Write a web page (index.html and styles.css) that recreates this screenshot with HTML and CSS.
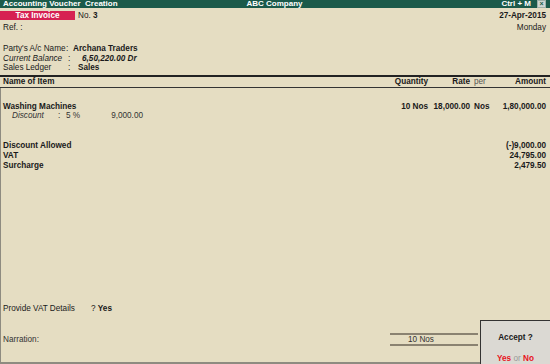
FILE: index.html
```html
<!DOCTYPE html>
<html lang="en">
<head>
    <meta charset="UTF-8">
    <title>Accounting Voucher Creation</title>
    <link rel="stylesheet" href="styles.css">
</head>
<body>

    <div class="titlebar">
        <span class="title-left">Accounting Voucher &nbsp;Creation</span>
        <span class="title-mid">ABC Company</span>
        <span class="title-right">Ctrl + M <span class="close-box">&times;</span></span>
    </div>

    <div class="voucher-head">
        <div class="head-row">
            <div class="head-left">
                <span class="vtype">Tax Invoice</span>
                <span class="vno">No. <strong>3</strong></span>
            </div>
            <strong>27-Apr-2015</strong>
        </div>
        <div class="head-row">
            <span>Ref. :</span>
            <span>Monday</span>
        </div>
    </div>

    <div class="party">
        <div class="party-row">
            <span class="label">Party's A/c Name</span>
            <span class="colon">:</span>
            <strong>Archana Traders</strong>
        </div>
        <div class="party-row">
            <span class="label"><em>Current Balance</em></span>
            <span class="colon wide">:</span>
            <strong class="balance"><em>6,50,220.00 Dr</em></strong>
        </div>
        <div class="party-row">
            <span class="label">Sales Ledger</span>
            <span class="colon wide">:</span>
            <strong>Sales</strong>
        </div>
    </div>

    <div class="item-head">
        <span class="col-name">Name of Item</span>
        <span class="col-qty">Quantity</span>
        <span class="col-rate">Rate</span>
        <span class="col-per">per</span>
        <span class="col-amt">Amount</span>
    </div>

    <div class="main">
        <div class="items">
            <div class="item-row bold">
                <span class="col-name">Washing Machines</span>
                <span class="col-qty">10 Nos</span>
                <span class="col-rate">18,000.00</span>
                <span class="col-per">Nos</span>
                <span class="col-amt">1,80,000.00</span>
            </div>
            <div class="disc-row">
                <em class="disc-label">Discount</em>
                <span class="disc-colon">:</span>
                <span class="disc-pct">5 %</span>
                <span class="disc-val">9,000.00</span>
            </div>
        </div>

        <div class="ledgers">
            <div class="item-row bold">
                <span class="col-name">Discount Allowed</span>
                <span class="col-amt">(-)9,000.00</span>
            </div>
            <div class="item-row bold">
                <span class="col-name">VAT</span>
                <span class="col-amt">24,795.00</span>
            </div>
            <div class="item-row bold">
                <span class="col-name">Surcharge</span>
                <span class="col-amt">2,479.50</span>
            </div>
        </div>

        <div class="vat-row">
            <span class="vat-label">Provide VAT Details</span>
            <span>? <strong>Yes</strong></span>
        </div>

        <div class="narration-row">
            <span class="narr-label">Narration:</span>
            <div class="total-qty">10 Nos</div>
        </div>

        <div class="accept">
            <strong>Accept ?</strong>
            <div class="accept-opts"><b>Yes</b> or <b>No</b></div>
        </div>
    </div>

</body>
</html>
```

FILE: styles.css
```css
body {
    font-family: 'Liberation Sans', Arial, sans-serif;
    font-size: 8.2px;
    color: #1a1a1a;
    background-color: #e5ddc2;
    margin: 0;
    width: 550px;
    height: 364px;
    display: flex;
    flex-direction: column;
    overflow: hidden;
    white-space: nowrap;
}

strong, b {
    font-weight: bold;
}

.titlebar {
    height: 8px;
    line-height: 8px;
    background-color: #1b5a4a;
    color: white;
    font-weight: bold;
    font-size: 8px;
    padding: 0 4px 0 3px;
    display: flex;
    justify-content: space-between;
    align-items: center;
}

.title-left,
.title-right {
    width: 160px;
}

.title-right {
    display: flex;
    justify-content: flex-end;
    align-items: center;
    gap: 6px;
}

.close-box {
    width: 7px;
    height: 6px;
    line-height: 6px;
    font-size: 7px;
    text-align: center;
    background-color: #cfd6d2;
    color: #1b5a4a;
    border: 1px solid #9fb0a8;
}

.voucher-head {
    padding: 2px 4px 0 0;
}

.head-row {
    display: flex;
    justify-content: space-between;
    align-items: center;
    height: 10px;
}

.head-row + .head-row {
    padding-left: 3px;
    margin-top: 2px;
}

.head-left {
    display: flex;
    align-items: center;
}

.vtype {
    width: 75px;
    height: 9px;
    line-height: 9px;
    background-color: #d62152;
    color: white;
    font-weight: bold;
    text-align: center;
}

.vno {
    margin-left: 3px;
}

.party {
    padding: 12px 0 0 3px;
}

.party-row {
    display: flex;
    height: 9.6px;
    line-height: 9.6px;
}

.label {
    width: 63px;
    flex-shrink: 0;
}

.colon {
    width: 7px;
    flex-shrink: 0;
}

.colon.wide {
    width: 10px;
    padding-left: 2px;
}

.balance {
    padding-left: 4px;
}

.item-head {
    display: flex;
    margin-top: 2px;
    border-top: 2px solid #222;
    border-bottom: 1px solid #333;
    height: 10px;
    line-height: 10px;
    font-weight: bold;
    padding: 0 4px 0 3px;
}

.col-name {
    flex: 1;
}

.col-qty {
    width: 48px;
    text-align: right;
}

.col-rate {
    width: 42px;
    text-align: right;
}

.col-per {
    width: 26px;
    padding-left: 4px;
    box-sizing: border-box;
}

.item-head .col-per {
    font-weight: normal;
    color: #555;
}

.col-amt {
    width: 50px;
    text-align: right;
}

.main {
    flex: 1;
    position: relative;
    display: flex;
    flex-direction: column;
    border-left: 1px solid #8e8b80;
    border-bottom: 2px solid #8e8b80;
}

.items {
    padding-top: 14px;
}

.item-row {
    display: flex;
    height: 9.6px;
    line-height: 9.6px;
    padding: 0 4px 0 2px;
}

.bold {
    font-weight: bold;
}

.disc-row {
    display: flex;
    height: 10px;
    line-height: 10px;
    padding-left: 11px;
    color: #333;
}

.disc-label {
    width: 46px;
}

.disc-colon {
    width: 8px;
}

.disc-pct {
    width: 20px;
}

.disc-val {
    width: 57px;
    text-align: right;
}

.ledgers {
    padding-top: 20px;
}

.vat-row {
    margin-top: auto;
    display: flex;
    height: 10px;
    line-height: 10px;
    padding-left: 2px;
    margin-bottom: 18px;
}

.vat-label {
    width: 88px;
}

.narration-row {
    display: flex;
    align-items: center;
    height: 14px;
    margin-bottom: 16px;
    padding-left: 2px;
}

.narr-label {
    flex: 1;
    color: #333;
}

.total-qty {
    width: 70px;
    margin-right: 72px;
    padding-left: 18px;
    height: 9px;
    line-height: 9px;
    border-top: 2px solid #8a8271;
    border-bottom: 2px solid #8a8271;
    color: #333;
}

.accept {
    position: absolute;
    right: 0;
    bottom: -2px;
    width: 70px;
    height: 44px;
    background-color: #dbd9d3;
    border: 1px solid #333;
    border-right: none;
    border-bottom: none;
    display: flex;
    flex-direction: column;
    align-items: center;
    padding-top: 12px;
    box-sizing: border-box;
}

.accept-opts {
    margin-top: auto;
    margin-bottom: 1px;
    color: #999;
}

.accept-opts b {
    color: #e8141c;
}
```
